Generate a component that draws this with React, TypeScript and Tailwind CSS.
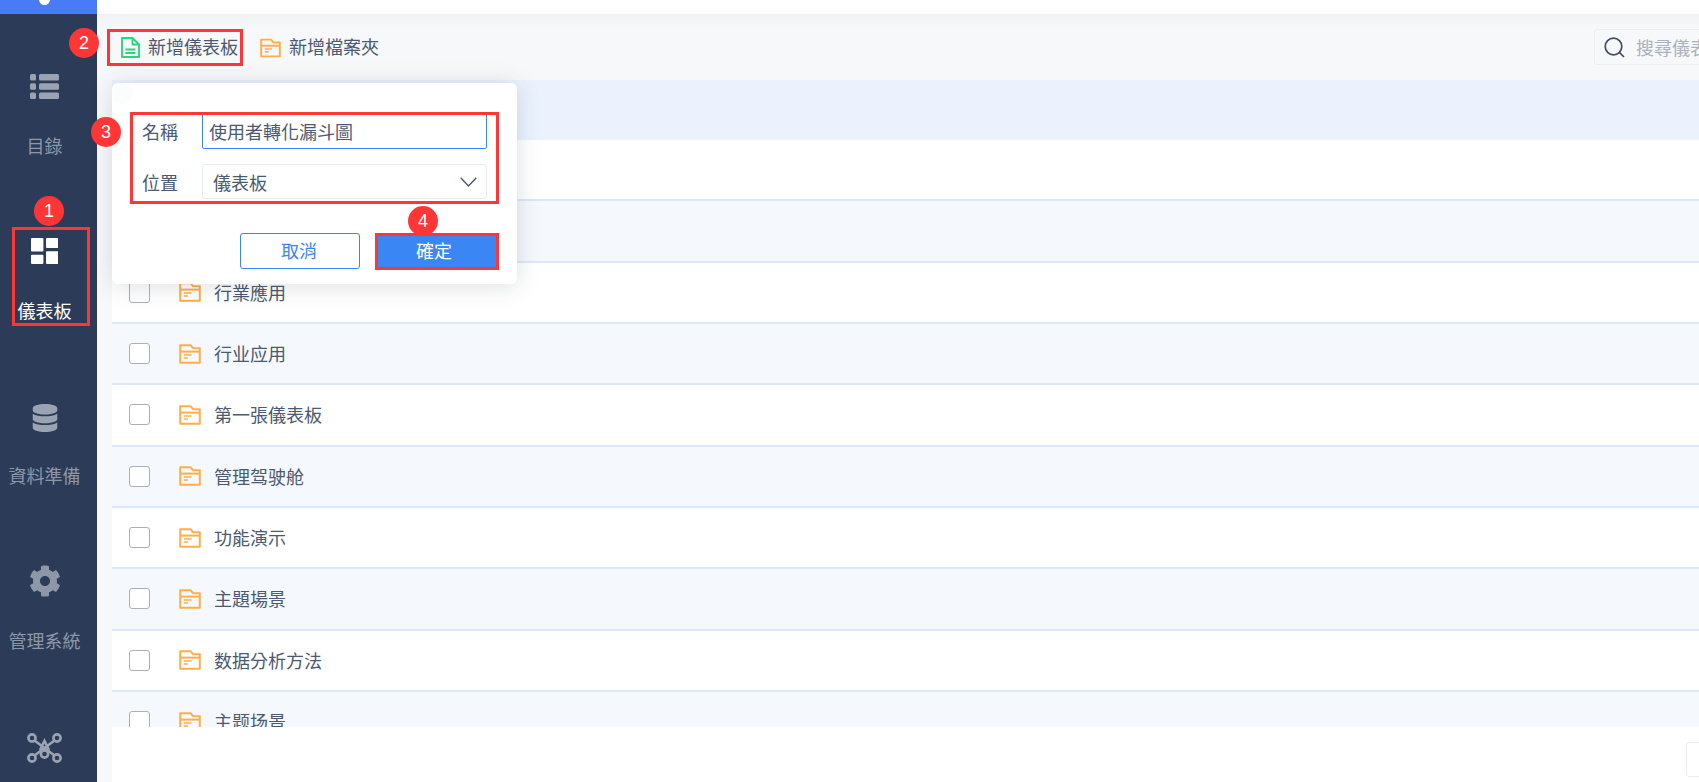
import React from "react";
import { FaDatabase, FaCog } from "react-icons/fa";

const font = { fontFamily: '"Noto Sans CJK TC", "Noto Sans", sans-serif' };

function Folder({ className = "" }: { className?: string }) {
  return (
    <svg viewBox="0 0 22 20" className={className} fill="none" stroke="currentColor" strokeWidth="2" strokeLinejoin="round">
      <path d="M1.2 18.8V1.2H11.5l2.5 3h6.8v14.6z" />
      <path d="M1.2 7.6h19.6" />
      <path d="M5 11h7.5M5 14h4" strokeWidth="1.6" />
    </svg>
  );
}

function DocIcon() {
  return (
    <svg viewBox="0 0 19 21" className="h-[21px] w-[19px] text-[#2ed47a]" fill="none" stroke="currentColor" strokeWidth="1.9" strokeLinejoin="round">
      <path d="M1 1h10.5L18 7.5V20H1z" />
      <path d="M11.5 1v6.5H18" />
      <path d="M4.5 12.5h10M4.5 16h10" strokeWidth="1.8" />
    </svg>
  );
}

function ListIcon() {
  return (
    <svg viewBox="0 0 29 25" className="h-[25px] w-[29px]" fill="#9aa3b2">
      <rect x="0" y="0" width="6" height="6.4" rx="1.5" />
      <rect x="0" y="9.3" width="6" height="6.4" rx="1.5" />
      <rect x="0" y="18.6" width="6" height="6.4" rx="1.5" />
      <rect x="9" y="0" width="20" height="6.4" rx="1.5" />
      <rect x="9" y="9.3" width="20" height="6.4" rx="1.5" />
      <rect x="9" y="18.6" width="20" height="6.4" rx="1.5" />
    </svg>
  );
}

function DashIcon() {
  return (
    <svg viewBox="0 0 27.5 26" className="h-[26px] w-[27.5px]" fill="#ffffff">
      <rect x="0" y="0" width="12.4" height="13.4" rx="1" />
      <rect x="15" y="0" width="12.5" height="10" rx="1" />
      <rect x="0" y="16.7" width="12.4" height="9.3" rx="1" />
      <rect x="15" y="13.3" width="12.5" height="12.7" rx="1" />
    </svg>
  );
}

function NetIcon() {
  return (
    <svg viewBox="0 0 35 30" className="mt-[3px] h-[30px] w-[35px]" fill="none" stroke="#9aa3b2" strokeWidth="2.6">
      <circle cx="5" cy="5" r="3.6" />
      <circle cx="30" cy="5" r="3.6" />
      <circle cx="5" cy="25" r="3.6" />
      <circle cx="30" cy="25" r="3.6" />
      <circle cx="17.5" cy="21" r="3.6" />
      <path d="M7.5 7.5L27.5 22.5M27.5 7.5L7.5 22.5M13 17L17.5 8L22 17" />
    </svg>
  );
}

function NavItem({ icon, label, active = false }: { icon: React.ReactNode; label: string; active?: boolean }) {
  return (
    <div className="flex h-[165px] flex-col items-center">
      <div className="flex h-[32px] items-center justify-center">{icon}</div>
      <div className={`mt-[29px] text-[18px] leading-[28px] ${active ? "text-white" : "text-[#8d97a7]"}`}>{label}</div>
    </div>
  );
}

function Row({ label, tinted }: { label: string; tinted: boolean }) {
  return (
    <div className={`flex h-[61.33px] shrink-0 items-center border-b-2 border-[#dbe8fb] pl-[17px] ${tinted ? "bg-[#f5f8fd]" : "bg-white"}`}>
      <div className="h-[21px] w-[21px] shrink-0 rounded-[3px] border border-[#a9afbb] bg-white" />
      <Folder className="ml-[29px] h-[20px] w-[22px] shrink-0 text-[#ffae4a]" />
      <span className="mb-[1px] ml-[13px] text-[18px] leading-[28px] text-[#4b5971]">{label}</span>
    </div>
  );
}

function Badge({ n, className }: { n: string; className: string }) {
  return (
    <div className={`absolute flex h-[30px] w-[30px] items-center justify-center rounded-full bg-[#ff3636] text-[18px] leading-none text-white ${className}`} style={{ fontFamily: '"Liberation Sans", sans-serif' }}>
      {n}
    </div>
  );
}

const rows = ["", "", "行業應用", "行业应用", "第一張儀表板", "管理驾驶舱", "功能演示", "主題場景", "数据分析方法", "主题场景", "", ""];

export default function App() {
  return (
    <div className="relative flex h-[782px] w-[1699px] overflow-hidden bg-[#f7f8fa]" style={font}>
      <aside className="flex w-[97px] shrink-0 flex-col bg-[#2c3c58]">
        <div className="relative h-[14px] shrink-0 overflow-hidden bg-[#4a7bf7]">
          <div className="absolute left-[39px] top-[-6px] h-[11px] w-[11px] rounded-full bg-white" />
        </div>
        <div className="flex flex-col pr-[8px] pt-[56px]">
          <NavItem icon={<ListIcon />} label="目錄" />
          <NavItem icon={<DashIcon />} label="儀表板" active />
          <NavItem icon={<FaDatabase className="mt-[3px] h-[28px] w-[28px] text-[#9aa3b2]" />} label="資料準備" />
          <NavItem icon={<FaCog className="h-[32px] w-[32px] text-[#8d97a7]" />} label="管理系統" />
          <NavItem icon={<NetIcon />} label="" />
        </div>
      </aside>

      <main className="flex min-w-0 flex-1 flex-col">
        <div className="h-[14px] shrink-0 bg-white" />
        <div className="flex h-[66px] shrink-0 items-start overflow-visible bg-gradient-to-b from-[#f0f1f3] from-0% via-[#f7f8fa] via-20% to-[#f7f8fa] pt-[15px]">
          <div className="ml-[24px] flex h-[37px] items-center">
            <DocIcon />
            <span className="mb-[3px] ml-[8px] text-[18px] leading-[28px] text-[#4b5971]">新增儀表板</span>
          </div>
          <div className="ml-[22px] flex h-[37px] items-center">
            <Folder className="h-[20px] w-[21px] text-[#ffae4a]" />
            <span className="mb-[3px] ml-[8px] text-[18px] leading-[28px] text-[#4b5971]">新增檔案夾</span>
          </div>
          <div className="ml-auto mr-[-95px] flex h-[36px] w-[200px] shrink-0 items-center rounded-[3px] border border-[#eceef1] pl-[9px]">
            <svg viewBox="0 0 21 21" className="h-[21px] w-[21px] text-[#3d4d66]" fill="none" stroke="currentColor" strokeWidth="1.7">
              <circle cx="9.5" cy="9.5" r="8.3" />
              <path d="M15.6 15.6L20 20" />
            </svg>
            <span className="ml-[11px] whitespace-nowrap text-[18px] leading-[28px] text-[#a9b2c0]">搜尋儀表板</span>
          </div>
        </div>
        <div className="ml-[15px] flex min-h-0 flex-1 flex-col bg-white">
          <div className="h-[60px] shrink-0 bg-[#ebf2fd]" />
          <div className="flex h-[587px] shrink-0 flex-col overflow-hidden">
            {rows.map((r, i) => (
              <Row key={i} label={r} tinted={i % 2 === 1} />
            ))}
          </div>
          <div className="flex flex-1 pl-[1574px] pt-[15px]">
            <div className="h-[35px] w-[40px] shrink-0 rounded-[3px] border border-[#e9ecf1]" />
          </div>
        </div>
      </main>

      {/* popover */}
      <div className="absolute left-[112px] top-[83px] h-[201px] w-[405px] rounded-[6px] bg-white px-[30px] pt-[30px] shadow-[0_2px_24px_rgba(40,50,70,0.16)]">
        <div className="absolute left-0 top-0 h-[21px] w-[21px] rounded-full bg-[#fbfcfd]" />
        <div className="flex h-[36px] items-center">
          <span className="w-[60px] text-[18px] leading-[28px] text-[#4b5971]">名稱</span>
          <div className="flex h-[36px] w-[285px] items-center rounded-[2px] border border-[#3b82f6] pb-[1px] pl-[6px] text-[18px] leading-[28px] text-[#4b5971]">使用者轉化漏斗圖</div>
        </div>
        <div className="mt-[15px] flex h-[35px] items-center">
          <span className="w-[60px] text-[18px] leading-[28px] text-[#4b5971]">位置</span>
          <div className="flex h-[35px] w-[285px] items-center justify-between rounded-[3px] border border-[#e9ecf1] pl-[10px] pr-[9px] text-[18px] leading-[28px] text-[#4b5971]">
            <span>儀表板</span>
            <svg viewBox="0 0 17 10" className="h-[10px] w-[17px]" fill="none" stroke="#4b5971" strokeWidth="1.4">
              <path d="M0.7 0.7L8.5 9L16.3 0.7" />
            </svg>
          </div>
        </div>
        <div className="mr-[-10px] mt-[34px] flex justify-end gap-[15px]">
          <button className="h-[36px] w-[120px] rounded-[3px] border border-[#3b86f5] bg-white pb-[2px] pr-[2px] text-[18px] leading-[28px] text-[#3b86f5]">取消</button>
          <button className="h-[36px] w-[122px] rounded-[2px] bg-[#3b86f5] pb-[2px] pr-[4px] text-[18px] leading-[28px] text-white">確定</button>
        </div>
      </div>

      {/* annotations */}
      <div className="pointer-events-none absolute left-[12px] top-[227px] h-[99px] w-[78px] border-[3px] border-[#ff3636]" />
      <div className="pointer-events-none absolute left-[107px] top-[29px] h-[37px] w-[136px] border-[3px] border-[#ff3636]" />
      <div className="pointer-events-none absolute left-[130px] top-[112px] h-[92px] w-[369px] border-[3px] border-[#ff3636]" />
      <div className="pointer-events-none absolute left-[375px] top-[233px] h-[37px] w-[124px] border-[3px] border-[#ff3636]" />
      <Badge n="1" className="left-[34px] top-[196px]" />
      <Badge n="2" className="left-[69px] top-[28px]" />
      <Badge n="3" className="left-[91px] top-[117px]" />
      <Badge n="4" className="left-[408px] top-[206px]" />
    </div>
  );
}
